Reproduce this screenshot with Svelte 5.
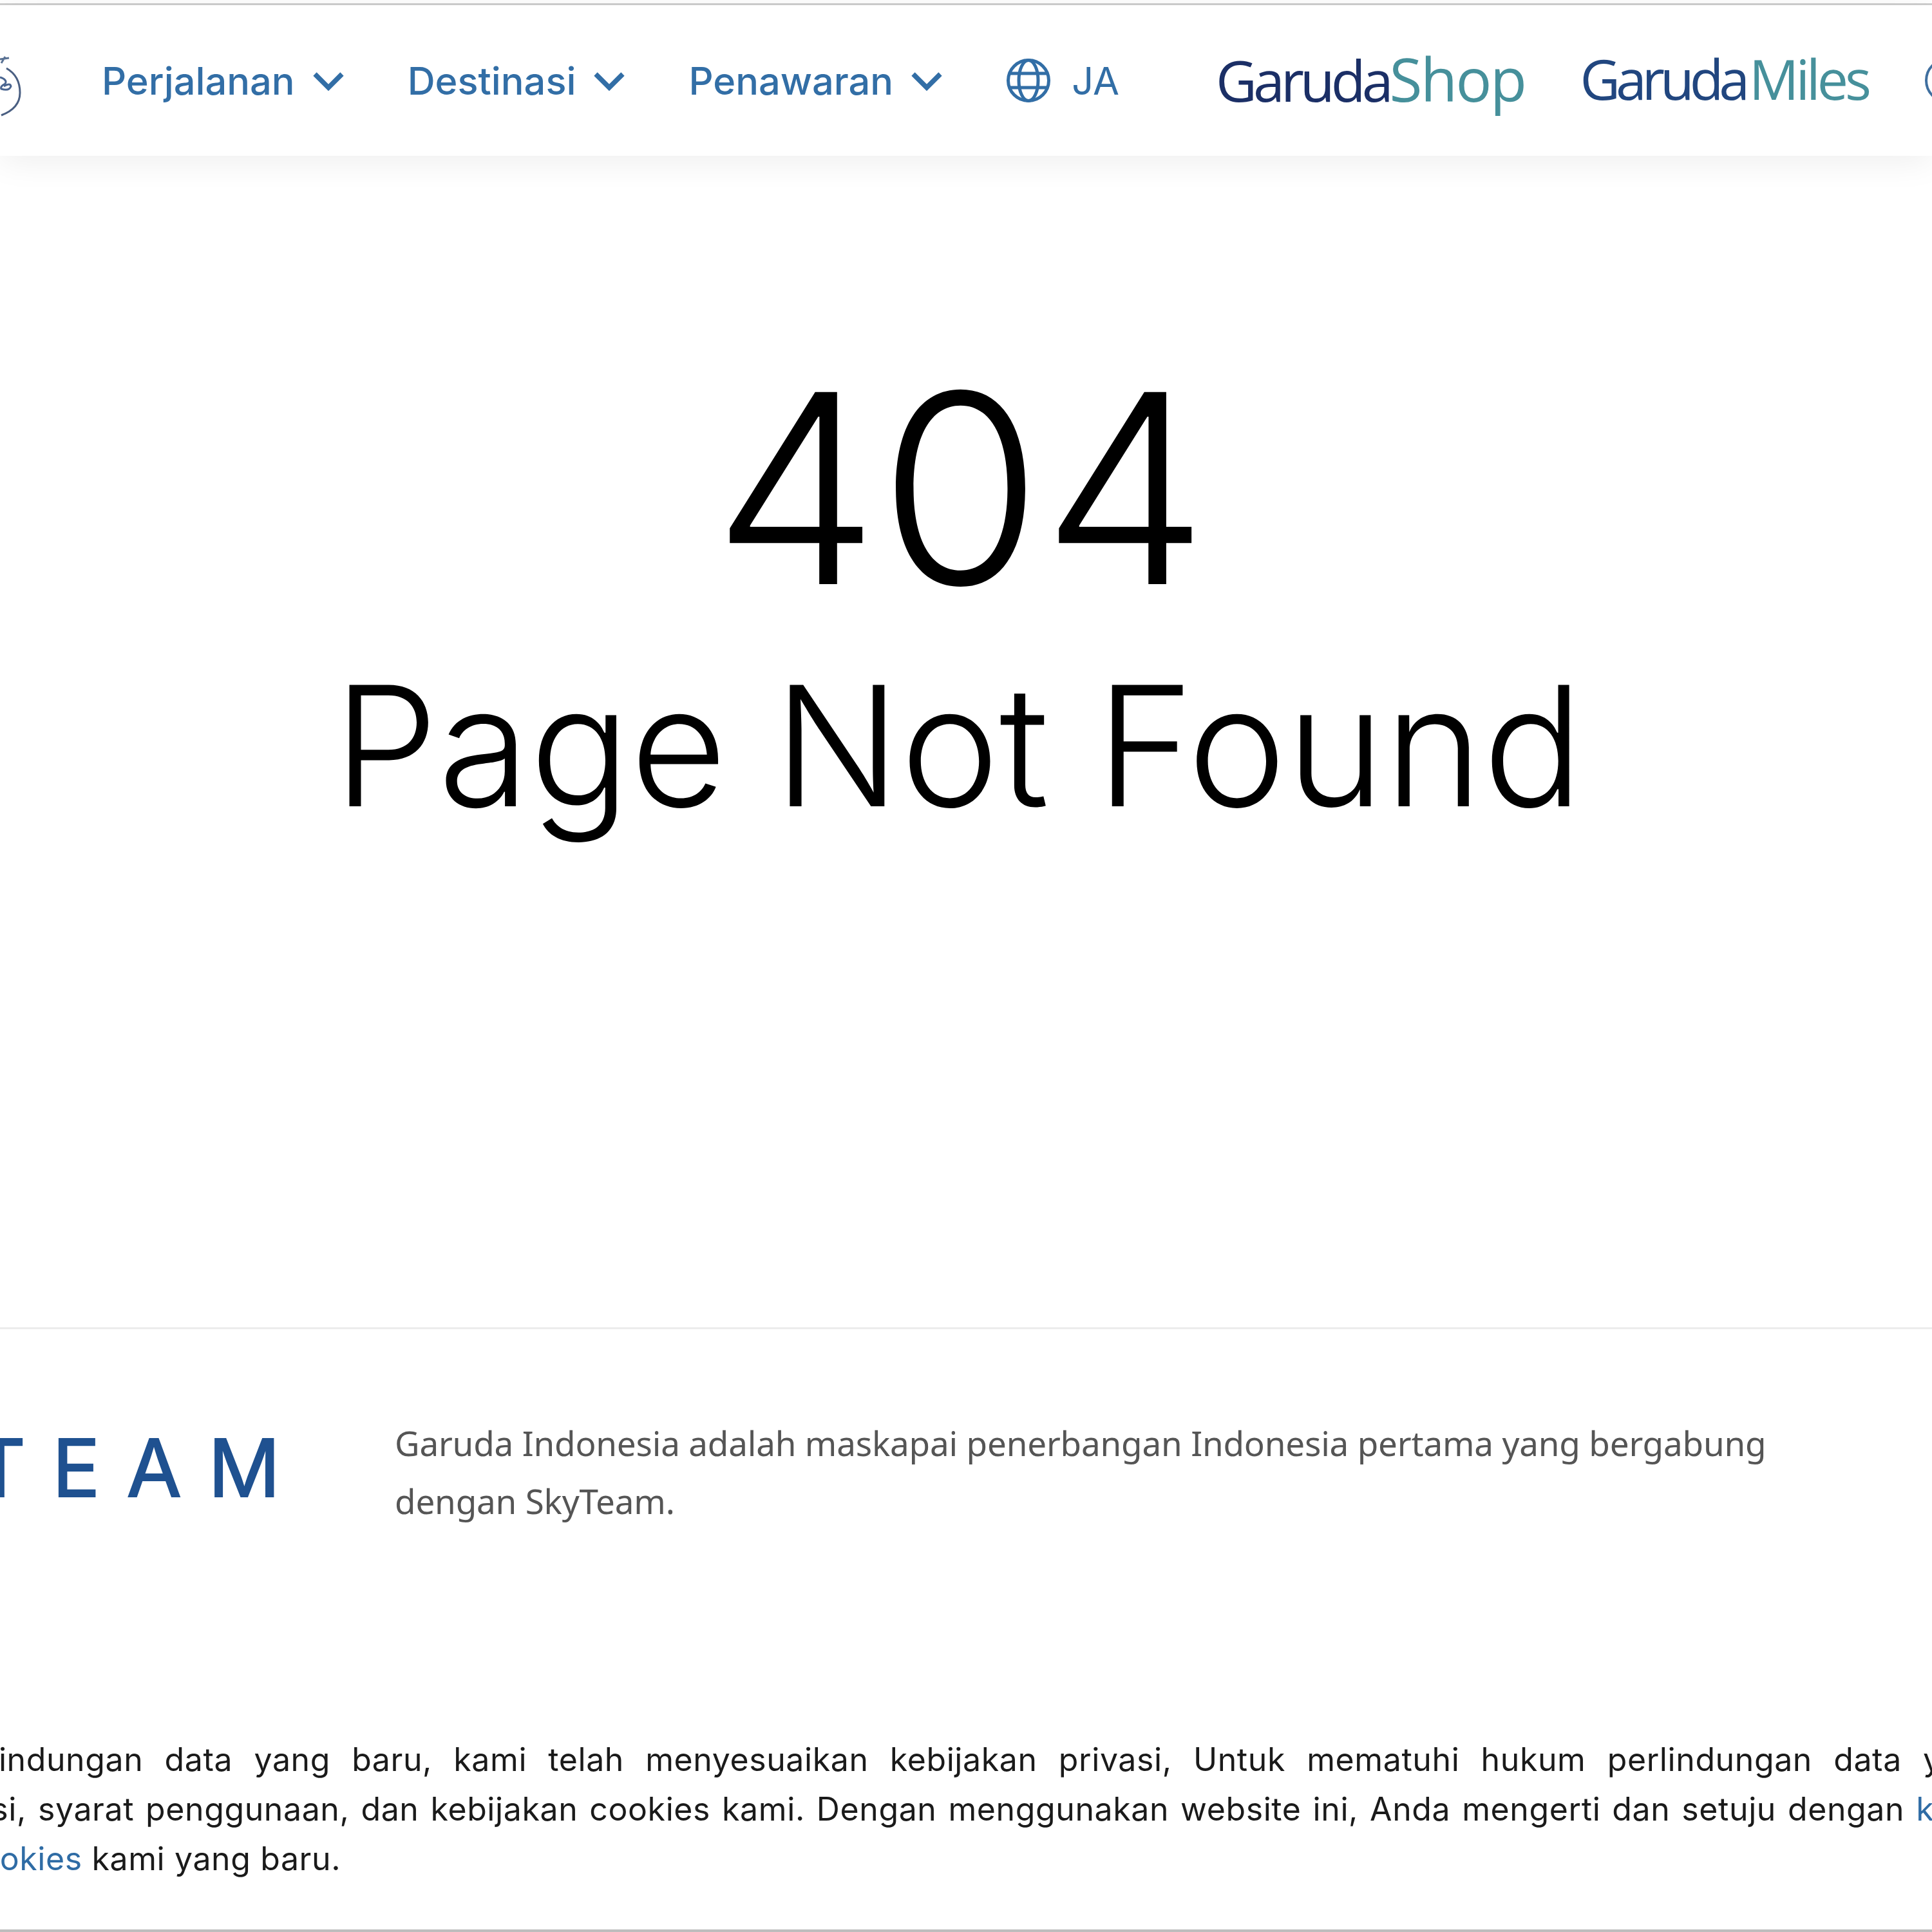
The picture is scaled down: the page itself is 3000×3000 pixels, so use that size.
<script lang="ts">
  const menus = ["Perjalanan", "Destinasi", "Penawaran"];
</script>

<div class="page">
  <div class="topline"></div>
  <header class="nav">
    <svg class="crest" viewBox="0 0 34 100" width="34" height="100" aria-hidden="true">
      <path d="M10 22 Q31 34 31 60 Q31 84 2 95" fill="none" stroke="#4a5f82" stroke-width="3" />
      <path d="M0 36 Q12 40 8 46 Q0 50 2 54 Q14 58 17 50 Q16 44 6 50" fill="none" stroke="#4a6590" stroke-width="3" />
      <path d="M0 8 L14 6 M2 14 L8 4" fill="none" stroke="#5a7294" stroke-width="3" />
    </svg>

    {#each menus as item}
      <button class="menu">
        <span>{item}</span>
        <svg class="chev" viewBox="0 0 50 30" width="50" height="30" aria-hidden="true">
          <path d="M4 4 L25 25 L46 4" fill="none" stroke="currentColor" stroke-width="7.5" />
        </svg>
      </button>
    {/each}

    <button class="menu lang">
      <svg viewBox="0 0 70 70" width="70" height="70" aria-hidden="true">
        <g fill="none" stroke="currentColor" stroke-width="5">
          <circle cx="35" cy="35" r="31.5" />
          <ellipse cx="35" cy="35" rx="15" ry="31.5" />
          <path d="M6 24 H64 M6 46 H64" />
        </g>
      </svg>
      <span>JA</span>
    </button>

    <div class="brand shop"><span class="dark">Garuda</span><span class="teal">Shop</span></div>
    <div class="brand miles"><span class="navy">Garuda</span><span class="teal">Miles</span></div>
    <div class="ring"></div>
  </header>

  <main class="notfound">
    <h1>404</h1>
    <h2>Page Not Found</h2>
  </main>

  <section class="alliance">
    <div class="skyteam">TEAM</div>
    <p>Garuda Indonesia adalah maskapai penerbangan Indonesia pertama yang bergabung dengan SkyTeam.</p>
  </section>

  <section class="notice">
    <span class="line first">perlindungan data yang baru, kami telah menyesuaikan kebijakan privasi, Untuk mematuhi hukum perlindungan data yang</span>
    <span class="line second">privasi, syarat penggunaan, dan kebijakan cookies kami. Dengan menggunakan website ini, Anda mengerti dan setuju dengan <a href="#top">kebijakan</a></span>
    <span class="line third"><a href="#top">cookies</a> kami yang baru.</span>
  </section>

  <div class="bottomline"></div>
</div>

<style>
  :global(body) {
    margin: 0;
    background: #fff;
  }

  .page {
    width: 3000px;
    height: 3000px;
    overflow: hidden;
    display: flex;
    flex-direction: column;
    background: #fff;
    font-family: Inter, "Liberation Sans", sans-serif;
  }

  .topline {
    height: 3px;
    margin-top: 5px;
    background: #cfcfcf;
    flex: none;
  }

  .nav {
    height: 234px;
    flex: none;
    display: flex;
    align-items: center;
    box-shadow: 0 8px 50px rgba(0, 0, 0, 0.07);
    position: relative;
    color: #326ea6;
  }

  .crest {
    flex: none;
    margin-right: 124px;
    margin-top: 18px;
  }

  .menu {
    display: flex;
    align-items: center;
    gap: 27px;
    margin: 0 98px 0 0;
    padding: 0;
    border: 0;
    background: none;
    color: inherit;
    font: 500 59.5px Inter, "Liberation Sans", sans-serif;
    flex: none;
  }

  .chev {
    margin-top: 2px;
  }

  .lang {
    gap: 32px;
    margin-right: 150px;
    font-weight: 400;
  }

  .brand {
    flex: none;
    margin-top: -6px;
    font-family: "Open Sans", "Noto Sans", sans-serif;
    font-size: 88px;
    font-weight: 500;
    line-height: 1;
    white-space: nowrap;
    letter-spacing: -6px;
  }

  .shop {
    margin-right: 85px;
  }

  .shop .teal {
    font-size: 93px;
    letter-spacing: -2.5px;
  }

  .miles {
    margin-right: 88px;
    font-size: 86px;
    letter-spacing: -7px;
  }

  .miles .teal {
    margin-left: 6px;
    letter-spacing: -5px;
  }

  .dark { color: #1b2f66; }
  .navy { color: #21467f; }
  .teal { color: #46909b; }

  .ring {
    width: 62px;
    height: 62px;
    flex: none;
    border: 4px solid #3f6f9f;
    border-radius: 50%;
  }

  .notfound {
    height: 1822px;
    flex: none;
    display: flex;
    flex-direction: column;
    align-items: center;
    color: #000;
    box-sizing: border-box;
    border-bottom: 3px solid #ececec;
  }

  h1,
  h2 {
    margin: 0;
    font-weight: 300;
    line-height: 1;
  }

  h1 {
    font-size: 410px;
    margin-top: 311px;
    margin-left: -17px;
  }

  h2 {
    font-size: 259px;
    margin-top: 65px;
    margin-left: -24px;
  }

  .alliance {
    height: 630px;
    flex: none;
    display: flex;
    align-items: flex-start;
    gap: 186px;
    box-sizing: border-box;
  }

  .skyteam {
    flex: none;
    width: 467px;
    margin-left: -40px;
    margin-top: 138px;
    font: 400 124px/1.25 Inter, sans-serif;
    color: #1f5190;
    letter-spacing: 41px;
    white-space: nowrap;
    -webkit-text-stroke: 2px #1f5190;
  }

  .alliance p {
    margin: 132px 0 0;
    width: 2240px;
    color: #555;
    font: 400 53px/90px "Noto Sans", sans-serif;
    letter-spacing: -0.2px;
  }

  .notice {
    flex: 1;
    color: #1a1a1a;
    font-size: 50px;
    line-height: 77px;
    letter-spacing: 0.6px;
  }

  .line {
    display: block;
    white-space: nowrap;
  }

  .first {
    margin-left: -96px;
    word-spacing: 18.5px;
  }

  .second {
    margin-left: -135px;
    word-spacing: 3.3px;
  }

  .third {
    margin-left: -60px;
  }

  a {
    color: #2f6ca5;
    text-decoration: none;
  }

  .bottomline {
    height: 4px;
    flex: none;
    background: #bdbdbd;
  }
</style>
